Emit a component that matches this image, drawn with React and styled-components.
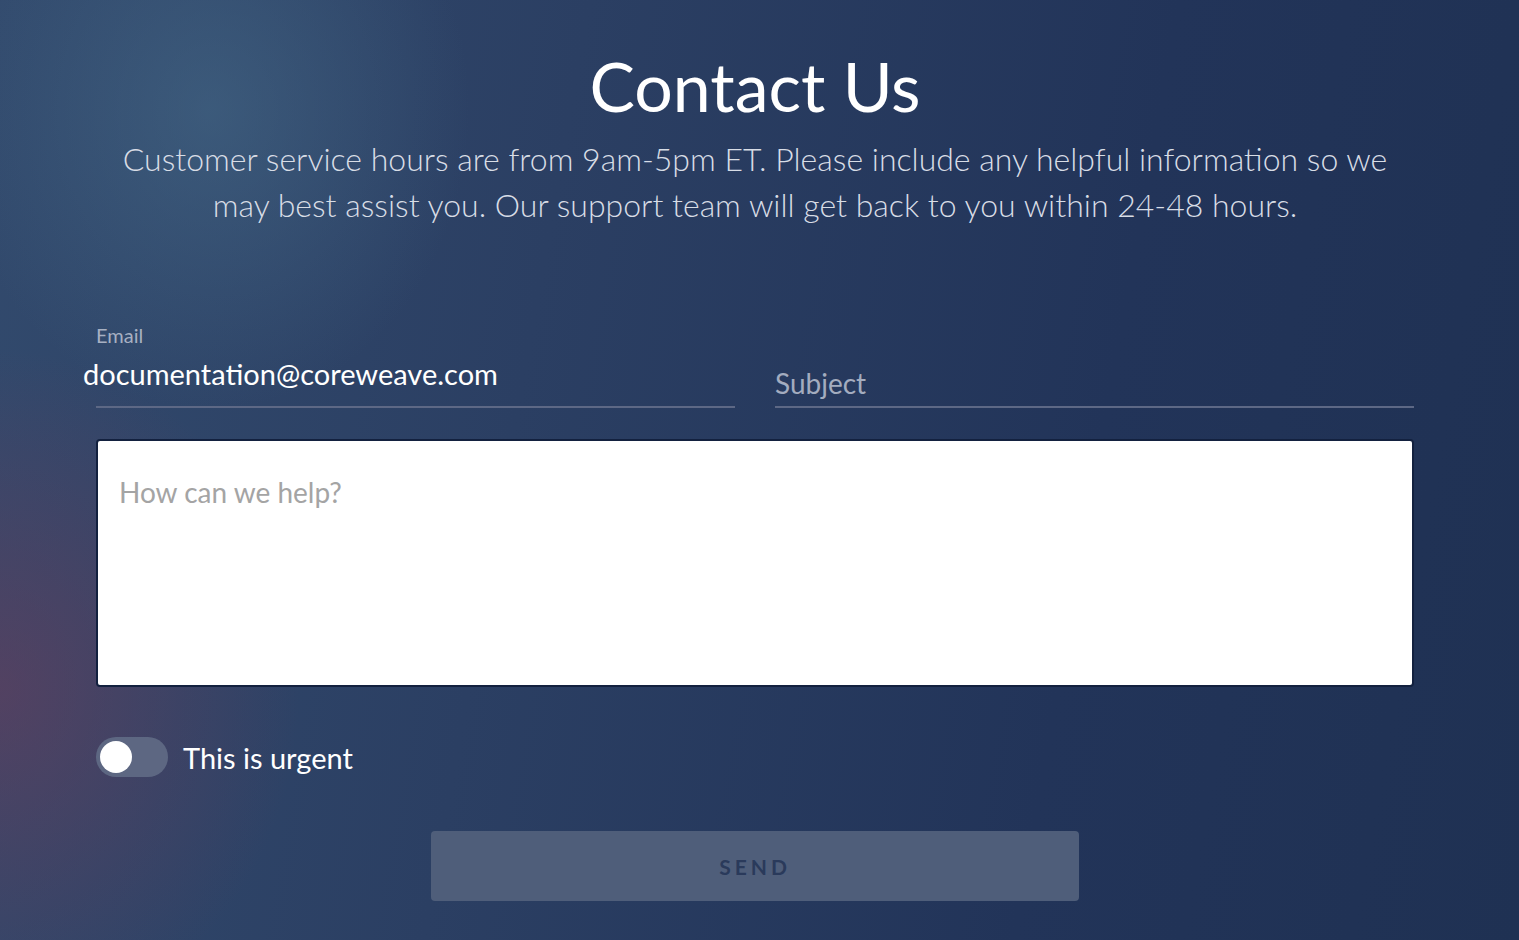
import styled, { createGlobalStyle } from "styled-components";

const GlobalStyle = createGlobalStyle`
  html, body {
    margin: 0;
    padding: 0;
    height: 100%;
  }
  body {
    font-family: Lato, "Open Sans", sans-serif;
    background: #223356;
  }
`;

const Page = styled.div`
  width: 1519px;
  height: 940px;
  overflow: hidden;
  background:
    radial-gradient(ellipse 260px 300px at 210px 110px, rgba(72, 110, 140, 0.5), rgba(72, 110, 140, 0) 100%),
    radial-gradient(ellipse 300px 340px at 0px 690px, rgba(110, 60, 90, 0.55), rgba(110, 60, 90, 0) 100%),
    linear-gradient(100deg, #324a6d 0%, #2b3f63 35%, #223459 70%, #1f3153 100%);
`;

const Wrapper = styled.div`
  width: 1318px;
  margin-left: 96px;
  padding-top: 46px;
`;

const Title = styled.h1`
  margin: 0;
  text-align: center;
  font-family: Lato, sans-serif;
  font-weight: 400;
  font-size: 68px;
  line-height: 80px;
  color: #ffffff;
`;

const Intro = styled.p`
  margin: 10px auto 0;
  max-width: 1290px;
  text-align: center;
  font-family: Lato, sans-serif;
  font-weight: 300;
  font-size: 32px;
  line-height: 46px;
  color: #d8dde6;
`;

const FieldRow = styled.div`
  display: grid;
  grid-template-columns: 1fr 1fr;
  gap: 40px;
  margin-top: 86px;
`;

const Field = styled.label`
  display: flex;
  flex-direction: column;
  justify-content: flex-end;
  border-bottom: 2px solid #5d6885;
  height: 94px;
  box-sizing: border-box;
  padding-bottom: ${(p) => (p.$placeholder ? "6px" : "15px")};
`;

const FieldLabel = styled.span`
  font-size: 20px;
  line-height: 24px;
  color: #a7b0c2;
  margin-bottom: 10px;
`;

const FieldValue = styled.span`
  margin-left: ${(p) => p.$shift || 0}px;
  font-size: ${(p) => (p.$placeholder ? "28px" : "29px")};
  line-height: 34px;
  color: ${(p) => (p.$placeholder ? "#a3acbf" : "#ffffff")};
`;

const MessageBox = styled.div`
  margin-top: 31px;
  height: 248px;
  box-sizing: border-box;
  background: #ffffff;
  border: 2px solid #13213f;
  border-radius: 4px;
  padding: 34px 21px;
  font-size: 28px;
  line-height: 34px;
  color: #a4a4a4;
`;

const ToggleRow = styled.div`
  display: flex;
  align-items: center;
  gap: 15px;
  margin-top: 49px;
  height: 42px;
`;

const Track = styled.div`
  width: 72px;
  height: 40px;
  border-radius: 20px;
  background: #5d6782;
  display: flex;
  align-items: center;
  padding-left: 4px;
  box-sizing: border-box;
`;

const Knob = styled.div`
  width: 32px;
  height: 32px;
  border-radius: 50%;
  background: #ffffff;
`;

const ToggleLabel = styled.span`
  font-size: 29px;
  color: #ffffff;
`;

const ButtonRow = styled.div`
  display: flex;
  justify-content: center;
  margin-top: 53px;
`;

const SendButton = styled.button`
  width: 648px;
  height: 70px;
  border: none;
  border-radius: 4px;
  background: #4f5e7a;
  color: #2a3a5b;
  font-family: Lato, sans-serif;
  font-weight: 700;
  font-size: 21px;
  letter-spacing: 4px;
  cursor: pointer;
`;

export default function App() {
  return (
    <Page>
      <GlobalStyle />
      <Wrapper>
        <Title>Contact Us</Title>
        <Intro>
          Customer service hours are from 9am-5pm ET. Please include any helpful information so we
          may best assist you. Our support team will get back to you within 24-48 hours.
        </Intro>
        <FieldRow>
          <Field>
            <FieldLabel>Email</FieldLabel>
            <FieldValue $shift={-13}>documentation@coreweave.com</FieldValue>
          </Field>
          <Field $placeholder>
            <FieldValue $placeholder>Subject</FieldValue>
          </Field>
        </FieldRow>
        <MessageBox>How can we help?</MessageBox>
        <ToggleRow>
          <Track>
            <Knob />
          </Track>
          <ToggleLabel>This is urgent</ToggleLabel>
        </ToggleRow>
        <ButtonRow>
          <SendButton>SEND</SendButton>
        </ButtonRow>
      </Wrapper>
    </Page>
  );
}
